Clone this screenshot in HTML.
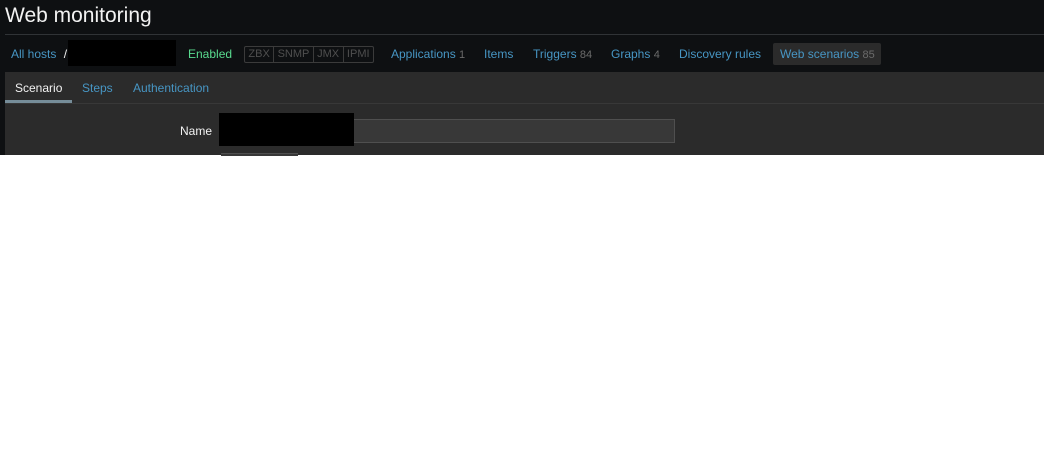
<!DOCTYPE html><html><head><style>
body{margin:0;width:1044px;height:460px;background:#fff;font-family:"Liberation Sans",Arial,sans-serif;font-size:12px;position:relative;overflow:hidden}
.top{position:absolute;left:0;top:0;width:1044px;height:155px;background:#0e1012}
.a{position:absolute;white-space:nowrap}
.blue{color:#4796c4}.g{color:#6b6b6b}
.b span{padding:0 3.4px}
</style></head><body>
<div class="top"></div>
<div class="a" style="left:5px;top:4px;font-size:21px;color:#f2f2f2">Web monitoring</div>
<div class="a" style="left:5px;top:34px;width:1039px;height:1px;background:#303336"></div>
<div class="a blue" style="left:11px;top:47px">All hosts <span style="color:#f2f2f2;margin-left:4px">/</span></div>
<div class="a" style="left:68px;top:40px;width:108px;height:26px;background:#000"></div>
<div class="a" style="left:188px;top:47px;color:#59db8f">Enabled</div>
<div class="a b" style="left:244px;top:46px;height:15px;border:1px solid #3b3b3b;border-radius:2px;font-size:11px;color:#4f4f4f;display:flex;line-height:15px">
<span style="border-right:1px solid #3b3b3b">ZBX</span><span style="border-right:1px solid #3b3b3b">SNMP</span><span style="border-right:1px solid #3b3b3b">JMX</span><span>IPMI</span></div>
<div class="a blue" style="left:391px;top:47px">Applications <span class="g" style="font-size:11px">1</span></div>
<div class="a blue" style="left:484px;top:47px">Items</div>
<div class="a blue" style="left:533px;top:47px">Triggers <span class="g" style="font-size:11px">84</span></div>
<div class="a blue" style="left:611px;top:47px">Graphs <span class="g" style="font-size:11px">4</span></div>
<div class="a blue" style="left:679px;top:47px">Discovery rules</div>
<div class="a" style="left:773px;top:43px;width:108px;height:22px;background:#2b2b2b;border-radius:2px"></div>
<div class="a blue" style="left:780px;top:47px">Web scenarios <span class="g" style="font-size:11px">85</span></div>
<div class="a" style="left:5px;top:72px;width:1039px;height:83px;background:#2b2b2b"></div>
<div class="a" style="left:5px;top:103px;width:1039px;height:1px;background:#383838"></div>
<div class="a" style="left:5px;top:100px;width:67px;height:3px;background:#768d99"></div>
<div class="a" style="left:15px;top:81px;color:#f2f2f2">Scenario</div>
<div class="a blue" style="left:82px;top:81px">Steps</div>
<div class="a blue" style="left:133px;top:81px">Authentication</div>
<div class="a" style="left:180px;top:124px;color:#f2f2f2">Name</div>
<div class="a" style="left:219px;top:119px;width:454px;height:22px;background:#383838;border:1px solid #4f4f4f"></div>
<div class="a" style="left:219px;top:113px;width:135px;height:33px;background:#000"></div>
<div class="a" style="left:221px;top:153px;width:77px;height:2px;background:#383838;border-top:1px solid #4f4f4f"></div>
</body></html>
